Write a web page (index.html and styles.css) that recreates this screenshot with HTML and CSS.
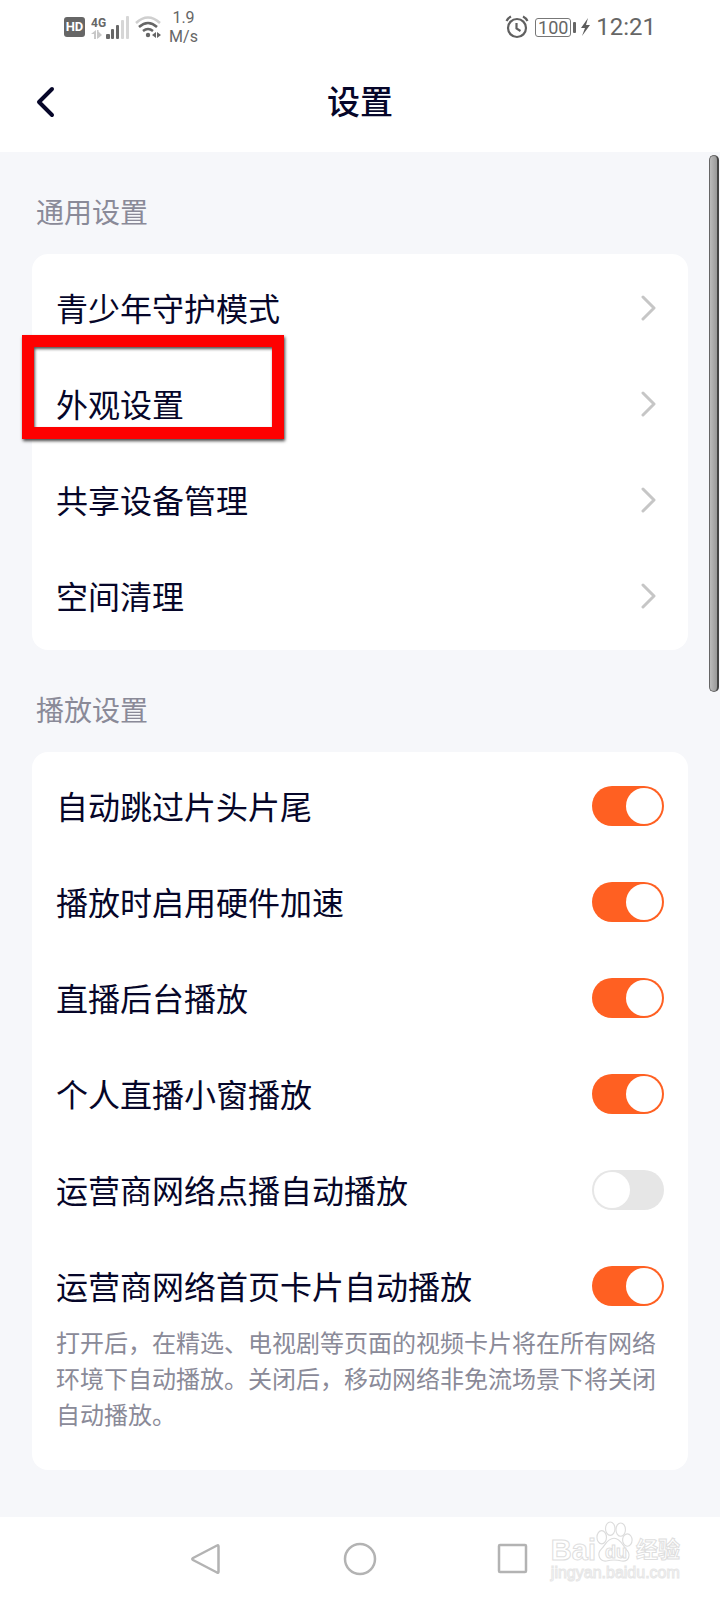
FILE: index.html
```html
<!DOCTYPE html>
<html lang="zh-CN">
<head>
<meta charset="utf-8">
<meta name="viewport" content="width=device-width, initial-scale=1">
<title>设置</title>
<link rel="stylesheet" href="styles.css">
</head>
<body>
<div class="screen">
  <div class="status">
    <div class="status-side">
      <span class="hd">HD</span>
      <div class="signal">
        <div class="network">
          <span class="network-type">4G</span>
          <svg width="11" height="9" viewBox="0 0 11 9" fill="#c8c8c8"><path d="M3 9V4H0L5 0v9zM6 9V0h1.500v1.500L11 5 7.500 8z"/></svg>
        </div>
        <svg width="23" height="23" viewBox="0 0 23 23"><g fill="#686868"><rect x="0" y="18" width="4" height="5" rx="1"/><rect x="5" y="13" width="3" height="10" rx="1"/><rect x="10" y="9" width="3" height="14" rx="1"/></g><g fill="#d6d6d6"><rect x="15" y="4" width="3" height="19" rx="1"/><rect x="20" y="0" width="3" height="23" rx="1"/></g></svg>
      </div>
      <svg width="28" height="24" viewBox="0 0 28 24" fill="none" stroke-width="2.500"><path d="M1 8Q13-3 25 8" stroke="#cfcfcf"/><path d="M4 12Q13 4 22 12M8 16Q13 12 18 16" stroke="#666"/><circle cx="13" cy="20" r="2.200" fill="#666"/><path d="M17 20l4-3v6zM22 17l4 3-4 3z" fill="#666"/></svg>
      <div class="speed"><span>1.9</span><span>M/s</span></div>
    </div>
    <div class="status-side">
      <svg width="24" height="24" viewBox="0 0 24 24" fill="none" stroke="#606060" stroke-width="2.200"><circle cx="12" cy="13" r="9"/><path d="M11.500 8v5.500l4 2.500"/><path d="M1.500 6Q3 3 6 1.500M22.500 6Q21 3 18 1.500"/></svg>
      <div class="battery"><span class="battery-level">100</span><i class="battery-tip"></i>
        <svg width="9" height="20" viewBox="0 0 9 20"><path d="M7 1L0 11h4L1 19l8-11H5z" fill="#5c5c5c"/></svg>
      </div>
      <span class="clock">12:21</span>
    </div>
  </div>

  <header class="header">
    <button class="back" type="button" aria-label="返回"><svg width="24" height="36" viewBox="0 0 24 36" fill="none" stroke="#060629" stroke-width="4" stroke-linecap="round" stroke-linejoin="round"><path d="M16 4L3 17l13 13"/></svg></button>
    <h1 class="title">设置</h1>
  </header>

  <main class="content">
    <section class="group">
      <h2 class="group-title">通用设置</h2>
      <ul class="card">
        <li class="row"><a class="link" href="#teen">青少年守护模式<svg class="chevron" viewBox="0 0 16 26"><path d="M2 2l11 11L2 24"/></svg></a></li>
        <li class="row marked"><a class="link" href="#look">外观设置<svg class="chevron" viewBox="0 0 16 26"><path d="M2 2l11 11L2 24"/></svg></a></li>
        <li class="row"><a class="link" href="#devices">共享设备管理<svg class="chevron" viewBox="0 0 16 26"><path d="M2 2l11 11L2 24"/></svg></a></li>
        <li class="row"><a class="link" href="#clean">空间清理<svg class="chevron" viewBox="0 0 16 26"><path d="M2 2l11 11L2 24"/></svg></a></li>
      </ul>
    </section>
    <section class="group">
      <h2 class="group-title">播放设置</h2>
      <ul class="card">
        <li class="row"><label class="link">自动跳过片头片尾<input class="switch" type="checkbox" role="switch" checked></label></li>
        <li class="row"><label class="link">播放时启用硬件加速<input class="switch" type="checkbox" role="switch" checked></label></li>
        <li class="row"><label class="link">直播后台播放<input class="switch" type="checkbox" role="switch" checked></label></li>
        <li class="row"><label class="link">个人直播小窗播放<input class="switch" type="checkbox" role="switch" checked></label></li>
        <li class="row"><label class="link">运营商网络点播自动播放<input class="switch" type="checkbox" role="switch"></label></li>
        <li class="row"><label class="link">运营商网络首页卡片自动播放<input class="switch" type="checkbox" role="switch" checked></label>
          <p class="note">打开后，在精选、电视剧等页面的视频卡片将在所有网络环境下自动播放。关闭后，移动网络非免流场景下将关闭自动播放。</p></li>
      </ul>
    </section>
    <div class="scroll-thumb"></div>
  </main>

  <nav class="nav">
    <button class="nav-button" type="button" aria-label="返回上一页"><svg width="34" height="34" viewBox="0 0 34 34"><path d="M28 3.500Q29.500 2.500 29.500 4.500v25Q29.500 31.500 28 30.500L4 18Q2.500 17 4 16z"/></svg></button>
    <button class="nav-button" type="button" aria-label="主屏幕"><svg width="34" height="34" viewBox="0 0 34 34"><circle cx="17" cy="17" r="15"/></svg></button>
    <button class="nav-button" type="button" aria-label="最近任务"><svg width="34" height="34" viewBox="0 0 34 34"><rect x="2" y="3" width="27" height="27" rx="1"/></svg></button>
    <div class="watermark">
      <div class="brand"><span>Bai</span><span class="paw"><svg width="38" height="42" viewBox="0 0 40 44" fill="#fff" stroke="#dcdcdc" stroke-width="1.200"><ellipse cx="6" cy="17" rx="5" ry="7"/><ellipse cx="15" cy="8" rx="5" ry="7"/><ellipse cx="26" cy="9" rx="5" ry="7"/><ellipse cx="33" cy="20" rx="5" ry="6.500"/><path d="M19 18C12 18 10 25 6 29C0 35 4 43 11 42Q19 40 27 42C35 43 37 35 32 30C28 26 26 18 19 18Z"/></svg><b class="du">du</b></span><span class="brand-cn">经验</span></div>
      <span class="site">jingyan.baidu.com</span>
    </div>
  </nav>
</div>
</body>
</html>
```
FILE: styles.css
```css
*, *::before, *::after { box-sizing: border-box; }
body {
  margin: 0;
  background: #fff;
  color: #060629;
  font-family: "Noto Sans CJK SC", sans-serif;
}
svg { display: block; flex: none; }
button { padding: 0; border: 0; background: none; display: flex; align-items: center; justify-content: center; }
.screen { min-height: 100vh; display: flex; flex-direction: column; }

.status {
  height: 54px;
  padding: 0 64px;
  display: flex;
  justify-content: space-between;
  align-items: center;
  color: #666;
  font-family: Roboto, sans-serif;
}
.status-side { display: flex; align-items: center; gap: 6px; }
.hd {
  width: 21px;
  height: 20px;
  border-radius: 3px;
  background: #666;
  color: #fff;
  font-size: 13px;
  font-weight: 700;
  line-height: 20px;
  text-align: center;
}
.signal { display: flex; align-items: flex-end; }
.network { display: flex; flex-direction: column; }
.network-type { font-size: 12px; line-height: 13px; font-weight: 700; }
.speed { display: flex; flex-direction: column; align-items: center; font-size: 16px; line-height: 19px; }
.battery { display: flex; align-items: center; gap: 2px; }
.battery-level {
  width: 36px;
  height: 19px;
  border: 1px solid #777;
  border-radius: 3px;
  font-size: 18px;
  line-height: 18px;
  text-align: center;
}
.battery-tip { width: 3px; height: 11px; margin-right: 3px; border-radius: 1px; background: #666; }
.clock { font-size: 24px; line-height: 28px; }

.header {
  height: 98px;
  padding: 0 36px;
  display: grid;
  grid-template-columns: 1fr auto 1fr;
  align-items: center;
}
.back { justify-self: start; color: inherit; }
.title { margin: 0; padding-bottom: 6px; font-size: 33px; line-height: 48px; font-weight: 500; }

.content {
  position: relative;
  flex: 1;
  padding: 0 32px 47px;
  background: #f6f7fa;
}
.group-title {
  margin: 0;
  padding: 38px 4px 22px;
  color: #8a8a98;
  font-size: 28px;
  line-height: 42px;
  font-weight: 400;
}
.card {
  margin: 0;
  padding: 6px 0;
  list-style: none;
  background: #fff;
  border-radius: 16px;
}
.row { padding: 24px; }
.link {
  min-height: 48px;
  display: flex;
  align-items: flex-start;
  justify-content: space-between;
  color: inherit;
  text-decoration: none;
  font-size: 32px;
  line-height: 46px;
}
.chevron {
  align-self: center;
  width: 16px;
  height: 26px;
  margin-right: 7px;
  fill: none;
  stroke: #c6c6c6;
  stroke-width: 3;
  stroke-linecap: round;
  stroke-linejoin: round;
}
.switch {
  appearance: none;
  align-self: center;
  flex: none;
  width: 72px;
  height: 40px;
  margin: 0;
  padding: 2px;
  border-radius: 20px;
  background: #e6e6e6;
  display: flex;
}
.switch::before { content: ""; width: 36px; height: 36px; border-radius: 50%; background: #fff; }
.switch:checked { background: #ff6022; justify-content: flex-end; }
.note {
  margin: 14px 0 8px;
  color: #8a8a98;
  font-size: 24px;
  line-height: 36px;
}

.marked { position: relative; }
.marked::after {
  content: "";
  position: absolute;
  left: -10px;
  top: -21px;
  width: 262px;
  height: 104px;
  border: 12px solid #fe0000;
  box-shadow: 1px 2px 3px #444, inset 1px 2px 3px #555;
  pointer-events: none;
}
.scroll-thumb {
  position: absolute;
  right: 1px;
  top: 3px;
  width: 10px;
  height: 537px;
  border: 1px solid #666;
  border-right: 2px solid #444;
  border-radius: 5px;
  background: linear-gradient(to right, #bbb, #999);
}

.nav {
  position: relative;
  height: 83px;
  display: flex;
  align-items: center;
  justify-content: center;
  gap: 120px;
  background: #fff;
}
.nav-button svg { fill: none; stroke: #b3b3b3; stroke-width: 2.5; stroke-linejoin: round; }
.watermark {
  position: absolute;
  right: 40px;
  top: 4px;
  color: #fff;
  font-family: "Liberation Sans", "Noto Sans CJK SC", sans-serif;
  -webkit-text-stroke: 1px #dedede;
}
.brand { display: flex; align-items: flex-end; font-size: 29px; line-height: 26px; font-weight: 700; }
.paw { position: relative; }
.du { position: absolute; left: 9px; bottom: 0; font-size: 18px; line-height: 22px; }
.brand-cn { margin-left: 2px; font-size: 22px; }
.site { display: block; padding-top: 2px; font-size: 16px; line-height: 16px; -webkit-text-stroke: 1px #e6e6e6; }
```
